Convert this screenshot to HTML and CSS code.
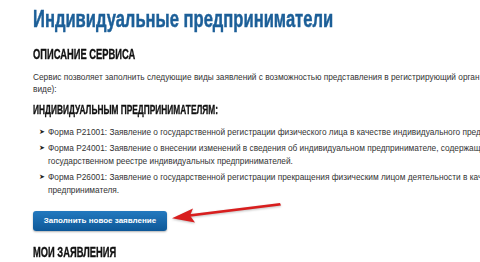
FILE: index.html
```html
<!DOCTYPE html>
<html lang="ru">
<head>
    <meta charset="UTF-8">
    <meta name="viewport" content="width=device-width, initial-scale=1.0">
    <title>Индивидуальные предприниматели</title>
    <link rel="stylesheet" href="styles.css">
</head>
<body>
    <div class="page">
        <h1 class="title">Индивидуальные предприниматели</h1>

        <h2 class="section">ОПИСАНИЕ СЕРВИСА</h2>
        <p class="text">Сервис позволяет заполнить следующие виды заявлений с возможностью представления в регистрирующий орган в электронном<br>виде):</p>

        <h3 class="subsection">ИНДИВИДУАЛЬНЫМ ПРЕДПРИНИМАТЕЛЯМ:</h3>
        <ul class="forms">
            <li>Форма Р21001: Заявление о государственной регистрации физического лица в качестве индивидуального предпринимателя</li>
            <li>Форма Р24001: Заявление о внесении изменений в сведения об индивидуальном предпринимателе, содержащихся в Едином<br>государственном реестре индивидуальных предпринимателей.</li>
            <li>Форма Р26001: Заявление о государственной регистрации прекращения физическим лицом деятельности в качестве индивидуального<br>предпринимателя.</li>
        </ul>

        <div class="actions">
            <a class="btn" href="#">Заполнить новое заявление</a>
            <svg class="arrow" width="116" height="24" viewBox="0 0 116 24">
                <path d="M111 2 L112 4.4 L21 15.8 L20 13.2 Z" fill="#d81e1e"/>
                <path d="M3 17.2 L24 7.4 L21 14.6 L26 21.6 Z" fill="#d81e1e"/>
            </svg>
        </div>

        <h2 class="section section-last">МОИ ЗАЯВЛЕНИЯ</h2>
    </div>
</body>
</html>
```

FILE: styles.css
```css
body {
    margin: 0;
    padding: 0;
    background-color: #fff;
    font-family: "Liberation Sans", Arial, sans-serif;
    color: #333;
    overflow: hidden;
}

.page {
    padding: 5px 0 0 33px;
    width: 700px;
    white-space: nowrap;
}

.title,
.section,
.subsection {
    font-family: "Liberation Sans", Arial, sans-serif;
    font-weight: bold;
    margin: 0;
    transform-origin: left center;
}

.title {
    color: #1c5f98;
    font-size: 24px;
    line-height: 28px;
    transform: scaleX(0.69);
    -webkit-text-stroke: 0.5px #1c5f98;
}

.section {
    color: #111;
    font-size: 14px;
    line-height: 16px;
    margin-top: 13px;
    transform: scaleX(0.667);
    -webkit-text-stroke: 0.35px #111;
}

.subsection {
    color: #111;
    font-size: 13px;
    line-height: 16px;
    margin-top: 7px;
    transform: scaleX(0.64);
    -webkit-text-stroke: 0.35px #111;
}

.text {
    font-size: 8.3px;
    line-height: 12px;
    margin: 9px 0 0;
}

.forms {
    list-style: none;
    margin: 8px 0 0;
    padding: 0 0 0 15px;
    font-size: 8.3px;
    line-height: 13px;
}

.forms li {
    position: relative;
    margin-bottom: 3px;
}

.forms li::before {
    content: "➤";
    position: absolute;
    left: -9px;
    top: 0;
    font-family: "DejaVu Sans", sans-serif;
    font-size: 7px;
    color: #222;
}

.actions {
    position: relative;
    margin-top: 14px;
}

.btn {
    display: inline-block;
    width: 134px;
    height: 20px;
    line-height: 20px;
    text-align: center;
    border-radius: 3px;
    background: linear-gradient(#2379bf, #0e5898);
    color: #fff;
    font-size: 8px;
    font-weight: bold;
    text-decoration: none;
    box-shadow: 0 1px 2px rgba(0, 0, 0, 0.3);
    vertical-align: top;
}

.arrow {
    position: absolute;
    left: 136px;
    top: -10px;
    filter: drop-shadow(0 1px 1px rgba(0, 0, 0, 0.25));
}

.section-last {
    margin-top: 13px;
}
```
